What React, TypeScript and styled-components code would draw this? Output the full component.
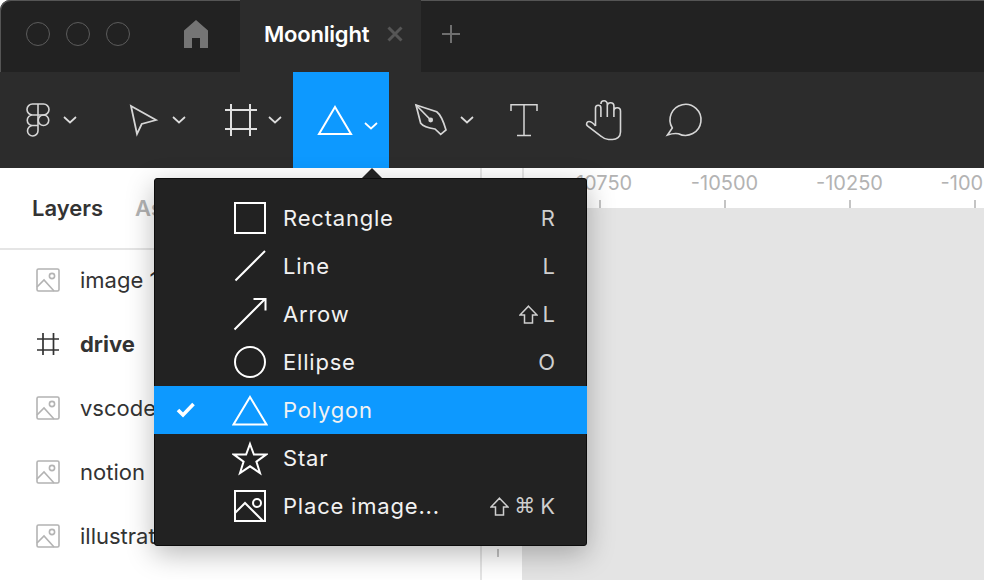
import { ReactNode } from 'react';
import styled, { createGlobalStyle } from 'styled-components';

const GlobalStyle = createGlobalStyle`
  * { box-sizing: border-box; }
  html, body { margin: 0; padding: 0; background: #fff; }
  body { font-family: Inter, "Liberation Sans", sans-serif; }
`;

const RULER_MARKS = ['-10750', '-10500', '-10250', '-10000'];
const LAYERS = [
  { name: 'image 1', kind: 'image' },
  { name: 'drive', kind: 'frame' },
  { name: 'vscode', kind: 'image' },
  { name: 'notion', kind: 'image' },
  { name: 'illustration', kind: 'image' },
];

function Chevron({ color = '#dcdcdc' }: { color?: string }) {
  return (
    <svg width="14" height="8" viewBox="0 0 14 8" fill="none">
      <path d="M1 1l6 5.500L13 1" stroke={color} strokeWidth="1.7" />
    </svg>
  );
}

function ToolIcon({ children, stroke = '#d6d6d6', width = 1.6 }: { children: ReactNode; stroke?: string; width?: number }) {
  return (
    <svg width="48" height="48" viewBox="0 0 48 48" fill="none" stroke={stroke} strokeWidth={width}>
      {children}
    </svg>
  );
}

function MenuIcon({ children }: { children: ReactNode }) {
  return (
    <svg width="36" height="36" viewBox="0 0 36 36" fill="none" stroke="#fff" strokeWidth="2">
      {children}
    </svg>
  );
}

function ShiftIcon() {
  return (
    <svg width="19" height="19" viewBox="0 0 19 19" fill="none" stroke="#cfcfcf" strokeWidth="1.500">
      <path d="M9.500 1.200L18 10h-4.500v8h-8v-8H1z" />
    </svg>
  );
}

function ImageLayerIcon() {
  return (
    <svg width="24" height="24" viewBox="0 0 24 24" fill="none" stroke="#b3b3b3" strokeWidth="1.6">
      <rect x="1" y="1" width="22" height="22" rx="1.5" />
      <circle cx="16" cy="8" r="2.6" />
      <path d="M1 19l7-7 10 11" />
    </svg>
  );
}

function FrameLayerIcon() {
  return (
    <svg width="24" height="24" viewBox="0 0 24 24" fill="none" stroke="#333" strokeWidth="1.7">
      <path d="M7 1v22M17.500 1v22M1 7h22M1 18h22" />
    </svg>
  );
}

export default function App() {
  return (
    <>
      <GlobalStyle />
      <Screen>
        <TitleBar>
          <TrafficLights>
            <TrafficLight />
            <TrafficLight />
            <TrafficLight />
          </TrafficLights>
          <HomeButton>
            <svg width="24" height="28" viewBox="0 0 24 28" fill="#757575">
              <path d="M12 0L24 10.500V28H16V18H8V28H0V10.500Z" />
            </svg>
          </HomeButton>
          <Tab>
            <TabTitle>Moonlight</TabTitle>
            <svg width="16" height="16" viewBox="0 0 16 16" stroke="#565656" strokeWidth="3">
              <path d="M1.500 1.500l13 13M14.500 1.500l-13 13" />
            </svg>
          </Tab>
          <NewTab>
            <svg width="20" height="20" viewBox="0 0 20 20" stroke="#6f6f6f" strokeWidth="2">
              <path d="M10 1v18M1 10h18" />
            </svg>
          </NewTab>
        </TitleBar>

        <Toolbar>
          <ToolButton $width={101} $pad={14} $gap={1}>
            <ToolIcon>
              <path d="M18.500 8h11a5.500 5.500 0 0 1 0 11h-11a5.500 5.500 0 0 1 0-11zM24 8v21.500M18.500 19a5.250 5.250 0 0 0 0 10.500H24M18.500 29.500a5.250 5.250 0 1 0 5.500 5.250v-5.250" />
              <circle cx="29.500" cy="24.250" r="5.250" />
            </ToolIcon>
            <Chevron />
          </ToolButton>
          <ToolButton $width={96} $pad={18} $gap={5}>
            <ToolIcon width={1.8}>
              <path d="M12 10l25 14-14.300 4L18 38z" />
            </ToolIcon>
            <Chevron />
          </ToolButton>
          <ToolButton $width={96} $pad={20} $gap={3}>
            <ToolIcon stroke="#e0e0e0" width={2}>
              <path d="M14 8v32M33 8v32M8 14h32M8 33h32" />
            </ToolIcon>
            <Chevron />
          </ToolButton>
          <ToolButton $width={96} $pad={18} $gap={5} $active>
            <ToolIcon stroke="#fff" width={2}>
              <polygon points="24,11 40,38 8,38" />
            </ToolIcon>
            <DroppedChevron>
              <Chevron color="#fff" />
            </DroppedChevron>
          </ToolButton>
          <ToolButton $width={95} $pad={18} $gap={5}>
            <ToolIcon width={1.7}>
              <path d="M9 9l20.700 6.700c4 3 7 10.300 9.300 18.300l-5.300 4.300L28 33c-8-1-12.300-3-14.300-5.700z" />
              <path d="M9 9l14.700 15" />
              <circle cx="23.700" cy="24" r="2.400" fill="#d6d6d6" stroke="none" />
            </ToolIcon>
            <Chevron />
          </ToolButton>
          <PlainTool>
            <ToolIcon width={1.5}>
              <path d="M11 15V8.800h26V15M24 8.800v30M17 39.500h14" />
            </ToolIcon>
          </PlainTool>
          <PlainTool>
            <ToolIcon>
              <path d="M15.500 30V12a2.700 2.700 0 0 1 5.400 0v9M20.900 8a3.200 3.200 0 0 1 6.400 0v13M27.300 10a3.300 3.300 0 0 1 6.600 0v11M33.900 15a3.300 3.300 0 0 1 6.600 0v21c0 5-4 7.500-8 7.500h-4c-3 0-5-1.200-7-3L7.500 30c-2-2-.5-4.500 1.500-4.500 2.500 0 4.500 2 6.500 4.500" />
            </ToolIcon>
          </PlainTool>
          <PlainTool>
            <ToolIcon>
              <path d="M7.500 39l4.800-7A15.500 15.500 0 1 1 18.500 37.700q-5-.8-11 1.300z" />
            </ToolIcon>
          </PlainTool>
        </Toolbar>

        <Workspace>
          <Sidebar>
            <SidebarTabs>
              <SidebarTab $active>Layers</SidebarTab>
              <SidebarTab>Assets</SidebarTab>
            </SidebarTabs>
            {LAYERS.map((layer) => (
              <LayerRow key={layer.name}>
                {layer.kind === 'image' ? <ImageLayerIcon /> : <FrameLayerIcon />}
                <LayerName $bold={layer.kind === 'frame'}>{layer.name}</LayerName>
              </LayerRow>
            ))}
          </Sidebar>
          <Stage>
            <Ruler>
              <RulerCorner />
              {RULER_MARKS.map((mark) => (
                <RulerMark key={mark}>
                  <RulerLabel>{mark}</RulerLabel>
                  <RulerTick />
                </RulerMark>
              ))}
            </Ruler>
            <StageBody>
              <SideRuler>
                <RulerTick />
              </SideRuler>
              <Canvas />
            </StageBody>
          </Stage>
        </Workspace>

        <Menu>
          <MenuItem>
            <CheckSlot />
            <MenuIcon>
              <rect x="3" y="3" width="30" height="30" />
            </MenuIcon>
            <MenuLabel>Rectangle</MenuLabel>
            <Shortcut>R</Shortcut>
          </MenuItem>
          <MenuItem>
            <CheckSlot />
            <MenuIcon>
              <path d="M3.500 32.500L33 3" />
            </MenuIcon>
            <MenuLabel>Line</MenuLabel>
            <Shortcut>L</Shortcut>
          </MenuItem>
          <MenuItem>
            <CheckSlot />
            <MenuIcon>
              <path d="M2.500 33.500L33 3M21.500 3H33.500V14.500" />
            </MenuIcon>
            <MenuLabel>Arrow</MenuLabel>
            <Shortcut>
              <ShiftIcon />L
            </Shortcut>
          </MenuItem>
          <MenuItem>
            <CheckSlot />
            <MenuIcon>
              <circle cx="18" cy="18" r="15" />
            </MenuIcon>
            <MenuLabel>Ellipse</MenuLabel>
            <Shortcut>O</Shortcut>
          </MenuItem>
          <MenuItem $selected>
            <CheckSlot>
              <svg width="20" height="16" viewBox="0 0 20 16" fill="none" stroke="#fff" strokeWidth="3.600">
                <path d="M2 8l5 5 10.500-11" />
              </svg>
            </CheckSlot>
            <MenuIcon>
              <polygon points="18,5 34.500,32.500 1.500,32.500" />
            </MenuIcon>
            <MenuLabel>Polygon</MenuLabel>
          </MenuItem>
          <MenuItem>
            <CheckSlot />
            <MenuIcon>
              <polygon points="18,4 21.900,14.600 34,14.600 24.400,21.600 28,33 18,26.300 8,33 11.600,21.600 2,14.600 14.100,14.600" />
            </MenuIcon>
            <MenuLabel>Star</MenuLabel>
          </MenuItem>
          <MenuItem>
            <CheckSlot />
            <MenuIcon>
              <rect x="3" y="3" width="30" height="30" />
              <circle cx="25" cy="15" r="4" />
              <path d="M3 25l10-10 18 18" />
            </MenuIcon>
            <MenuLabel>Place image...</MenuLabel>
            <Shortcut>
              <ShiftIcon />
              <CommandGlyph>⌘</CommandGlyph>K
            </Shortcut>
          </MenuItem>
        </Menu>
      </Screen>
    </>
  );
}

const Screen = styled.div`
  position: relative;
  width: 984px;
  height: 580px;
  overflow: hidden;
  background: #fff;
`;

const TitleBar = styled.div`
  display: flex;
  align-items: center;
  height: 72px;
  padding-bottom: 4px;
  background: #222;
  border-top-left-radius: 10px;
  box-shadow: inset 1px 1px 0 #555;
`;

const TrafficLights = styled.div`
  display: flex;
  gap: 16px;
  padding-left: 26px;
`;

const TrafficLight = styled.span`
  width: 24px;
  height: 24px;
  border: 1.5px solid #5c5c5c;
  border-radius: 50%;
`;

const HomeButton = styled.div`
  display: flex;
  margin-left: 54px;
`;

const Tab = styled.div`
  display: flex;
  align-self: flex-start;
  align-items: center;
  width: 181px;
  height: 72px;
  margin-left: 32px;
  padding: 0 0 4px 24px;
  gap: 18px;
  background: #2c2c2c;
`;

const TabTitle = styled.span`
  color: #fff;
  font-size: 22px;
  font-weight: 600;
  letter-spacing: -0.2px;
`;

const NewTab = styled.div`
  display: flex;
  margin-left: 20px;
`;

const Toolbar = styled.div`
  display: flex;
  height: 96px;
  background: #2c2c2c;
`;

const ToolButton = styled.div<{ $width: number; $pad: number; $gap: number; $active?: boolean }>`
  display: flex;
  align-items: center;
  width: ${(p) => p.$width}px;
  padding-left: ${(p) => p.$pad}px;
  gap: ${(p) => p.$gap}px;
  background: ${(p) => (p.$active ? '#0d99ff' : 'transparent')};
`;

const DroppedChevron = styled.span`
  display: flex;
  margin-top: 12px;
`;

const PlainTool = styled.div`
  display: flex;
  align-items: center;
  justify-content: center;
  width: 80px;
`;

const Workspace = styled.div`
  display: flex;
  height: 412px;
`;

const Sidebar = styled.div`
  width: 482px;
  flex-shrink: 0;
  border-right: 2px solid #e5e5e5;
  background: #fff;
`;

const SidebarTabs = styled.div`
  display: flex;
  align-items: center;
  gap: 32px;
  height: 80px;
  padding-left: 32px;
  box-shadow: 0 2px 0 #e5e5e5;
`;

const SidebarTab = styled.span<{ $active?: boolean }>`
  color: ${(p) => (p.$active ? '#333' : '#b3b3b3')};
  font-size: 22px;
  font-weight: 600;
`;

const LayerRow = styled.div`
  display: flex;
  align-items: center;
  gap: 20px;
  height: 64px;
  padding-left: 36px;
`;

const LayerName = styled.span<{ $bold?: boolean }>`
  color: #333;
  font-size: 22px;
  font-weight: ${(p) => (p.$bold ? 700 : 400)};
`;

const Stage = styled.div`
  display: flex;
  flex-direction: column;
  flex: 1;
  min-width: 0;
`;

const Ruler = styled.div`
  display: flex;
  flex-shrink: 0;
  height: 40px;
  overflow: hidden;
`;

const RulerCorner = styled.div`
  flex: 0 0 42px;
  margin-right: 13px;
  border-right: 2px solid #e5e5e5;
`;

const RulerMark = styled.div`
  display: flex;
  flex-direction: column;
  align-items: center;
  flex: 0 0 125px;
`;

const RulerLabel = styled.span`
  flex: 1;
  color: #b3b3b3;
  font-size: 20px;
  line-height: 30px;
  white-space: nowrap;
`;

const RulerTick = styled.span`
  flex-shrink: 0;
  width: 2px;
  height: 8px;
  background: #c4c4c4;
`;

const StageBody = styled.div`
  display: flex;
  flex: 1;
`;

const SideRuler = styled.div`
  display: flex;
  flex-direction: column;
  justify-content: flex-end;
  align-items: center;
  width: 40px;
  padding: 0 9px 23px 0;
  background: #fff;
`;

const Canvas = styled.div`
  flex: 1;
  background: #e4e4e4;
`;

const Menu = styled.div`
  position: absolute;
  top: 178px;
  left: 154px;
  width: 433px;
  height: 368px;
  padding: 15px 0;
  background: #222;
  border: 1px solid #0c0c0c;
  border-radius: 3px;
  box-shadow: 0 8px 28px rgba(0, 0, 0, 0.28);

  &::before {
    content: '';
    position: absolute;
    top: -11px;
    left: 207px;
    border-left: 10px solid transparent;
    border-right: 10px solid transparent;
    border-bottom: 10px solid #222;
  }
`;

const MenuItem = styled.div<{ $selected?: boolean }>`
  display: flex;
  align-items: center;
  height: 48px;
  margin: 0 -1px;
  background: ${(p) => (p.$selected ? '#0d99ff' : 'transparent')};
`;

const CheckSlot = styled.span`
  display: flex;
  width: 78px;
  padding-left: 22px;
`;

const MenuLabel = styled.span`
  margin-left: 15px;
  color: #f2f2f2;
  font-size: 22px;
  letter-spacing: 0.8px;
`;

const Shortcut = styled.span`
  display: flex;
  align-items: center;
  gap: 5px;
  margin-left: auto;
  padding-right: 32px;
  color: #cfcfcf;
  font-size: 22px;
`;

const CommandGlyph = styled.span`
  font-family: "DejaVu Sans", sans-serif;
  font-size: 21px;
`;
